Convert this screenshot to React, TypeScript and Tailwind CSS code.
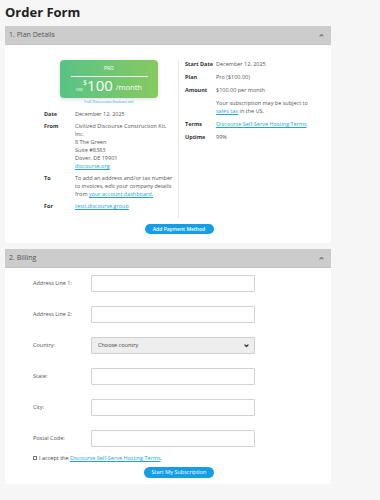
import React from 'react'

// ── Icons ─────────────────────────────────────────────────────────────────────

function ChevronUp() {
  return (
    <svg width="5" height="4" viewBox="0 0 10 8" fill="none" stroke="#777" strokeWidth="2.2"
      strokeLinecap="round" strokeLinejoin="round">
      <polyline points="2 6 5 3 8 6" />
    </svg>
  )
}

function ChevronDown() {
  return (
    <svg width="5" height="4" viewBox="0 0 10 8" fill="none" stroke="#333" strokeWidth="2.6"
      strokeLinecap="round" strokeLinejoin="round">
      <polyline points="2 2 5 5 8 2" />
    </svg>
  )
}

// ── Pieces ────────────────────────────────────────────────────────────────────

function SectionHeader({ title }: { title: string }) {
  return (
    <div className="h-[19px] bg-[#cccccc] border-b border-[#c2c2c2] flex items-center justify-between pl-[4px] pr-[7px]">
      <span className="text-[7px] text-[#555]">{title}</span>
      <ChevronUp />
    </div>
  )
}

function Link({ children }: { children: React.ReactNode }) {
  return <span className="text-[#1ea4e0] underline">{children}</span>
}

function InfoRow({ label, children }: { label: string; children: React.ReactNode }) {
  return (
    <div className="flex leading-[8px]">
      <span className="w-[31px] shrink-0 font-bold text-[#333]">{label}</span>
      <div className="flex-1 text-[#555]">{children}</div>
    </div>
  )
}

const FIELDS = ['Address Line 1:', 'Address Line 2:', 'Country:', 'State:', 'City:', 'Postal Code:']

// ── App ───────────────────────────────────────────────────────────────────────

export default function App() {
  return (
    <div className="min-h-[500px] bg-[#f6f6f6] font-['Open_Sans',sans-serif] pt-[6px]">
      <div className="w-[326px] ml-[5px]">
        <h1 className="text-[13px] leading-[13px] font-bold text-[#222] mb-[7px]">Order Form</h1>

        {/* 1. Plan Details */}
        <SectionHeader title="1. Plan Details" />
        <div className="bg-white pt-[15px] pb-[9px]">
          <div className="ml-[35px] w-[278px] flex text-[5.5px]">
            {/* left */}
            <div className="w-[139px] border-r border-[#e6e6e6] pl-[4px] pr-[4px] pb-[8px] flex flex-col">
              <div className="mx-auto w-[98px] h-[38px] rounded-[4px] bg-linear-to-r from-[#57c386] to-[#86c95f] shadow-[0_1px_4px_rgba(0,0,0,0.15)] flex flex-col items-center text-white">
                <div className="text-[5px] leading-[5px] mt-[6px]">PRO</div>
                <div className="w-[77px] h-px bg-white/90 mt-[5px]" />
                <div className="flex items-end mt-[1px] leading-none">
                  <span className="text-[3.5px] mb-[2px]">USD</span>
                  <span className="text-[7px] self-start mt-[1px]">$</span>
                  <span className="text-[15px] leading-[15px]">100</span>
                  <span className="text-[7.5px] ml-[3px] mb-[2px]">/month</span>
                </div>
              </div>
              <div className="text-center text-[4.2px] leading-[8px] text-[#1ea4e0]">Full Discourse feature set</div>
              <div className="flex flex-col gap-[4px] mt-[4px]">
                <InfoRow label="Date">December 12, 2025</InfoRow>
                <InfoRow label="From">
                  Civilized Discourse Construction Kit, Inc.
                  <br />8 The Green
                  <br />Suite #8383
                  <br />Dover, DE 19901
                  <br /><Link>discourse.org</Link>
                </InfoRow>
                <InfoRow label="To">
                  <div>To add an address and/or tax number</div>
                  <div>to invoices, edit your company details</div>
                  <div>from <Link>your account dashboard.</Link></div>
                </InfoRow>
                <InfoRow label="For"><Link>testi.discourse.group</Link></InfoRow>
              </div>
            </div>

            {/* right */}
            <div className="w-[139px] pl-[6px] flex flex-col gap-[5px]">
              <InfoRow label="Start Date">December 12, 2025</InfoRow>
              <InfoRow label="Plan">Pro ($100.00)</InfoRow>
              <InfoRow label="Amount">$100.00 per month</InfoRow>
              <InfoRow label="">
                <div>Your subscription may be subject to</div>
                <div><Link>sales tax</Link> in the US.</div>
              </InfoRow>
              <InfoRow label="Terms"><Link>Discourse Self-Serve Hosting Terms</Link></InfoRow>
              <InfoRow label="Uptime">99%</InfoRow>
            </div>
          </div>

          <div className="ml-[35px] w-[278px] flex justify-center mt-[6px]">
            <button className="w-[69px] h-[10px] rounded-full bg-[#159ee8] text-white text-[5px] leading-none font-semibold">
              Add Payment Method
            </button>
          </div>
        </div>

        {/* 2. Billing */}
        <div className="mt-[6px]">
          <SectionHeader title="2. Billing" />
        </div>
        <div className="bg-white pt-[7px] pb-[6px] pl-[28px]">
          <div className="flex flex-col gap-[14px]">
            {FIELDS.map(label => (
              <div key={label} className="flex items-center h-[17px]">
                <span className="w-[58px] shrink-0 text-[5.5px] text-[#555]">{label}</span>
                {label === 'Country:' ? (
                  <div className="w-[164px] h-[17px] bg-[#eeeeee] border border-[#cfcfcf] rounded-[1px] flex items-center justify-between pl-[6px] pr-[5px]">
                    <span className="text-[5.5px] text-[#444]">Choose country</span>
                    <ChevronDown />
                  </div>
                ) : (
                  <div className="w-[164px] h-[17px] bg-white border border-[#d2d2d2] rounded-[1px] shadow-[inset_0_0_1px_rgba(0,0,0,0.08)]" />
                )}
              </div>
            ))}
          </div>
          <div className="flex items-center mt-[7px] h-[8px] text-[5.5px] text-[#444]">
            <span className="w-[4px] h-[4px] border border-[#777] rounded-[0.5px] mr-[2px]" />
            <span>I accept the <Link>Discourse Self-Serve Hosting Terms</Link>.</span>
          </div>
          <div className="w-[278px] ml-[7px] flex justify-center mt-[5px]">
            <button className="w-[70px] h-[11px] rounded-full bg-[#159ee8] text-white text-[5.5px] leading-none">
              Start My Subscription
            </button>
          </div>
        </div>
      </div>
    </div>
  )
}
